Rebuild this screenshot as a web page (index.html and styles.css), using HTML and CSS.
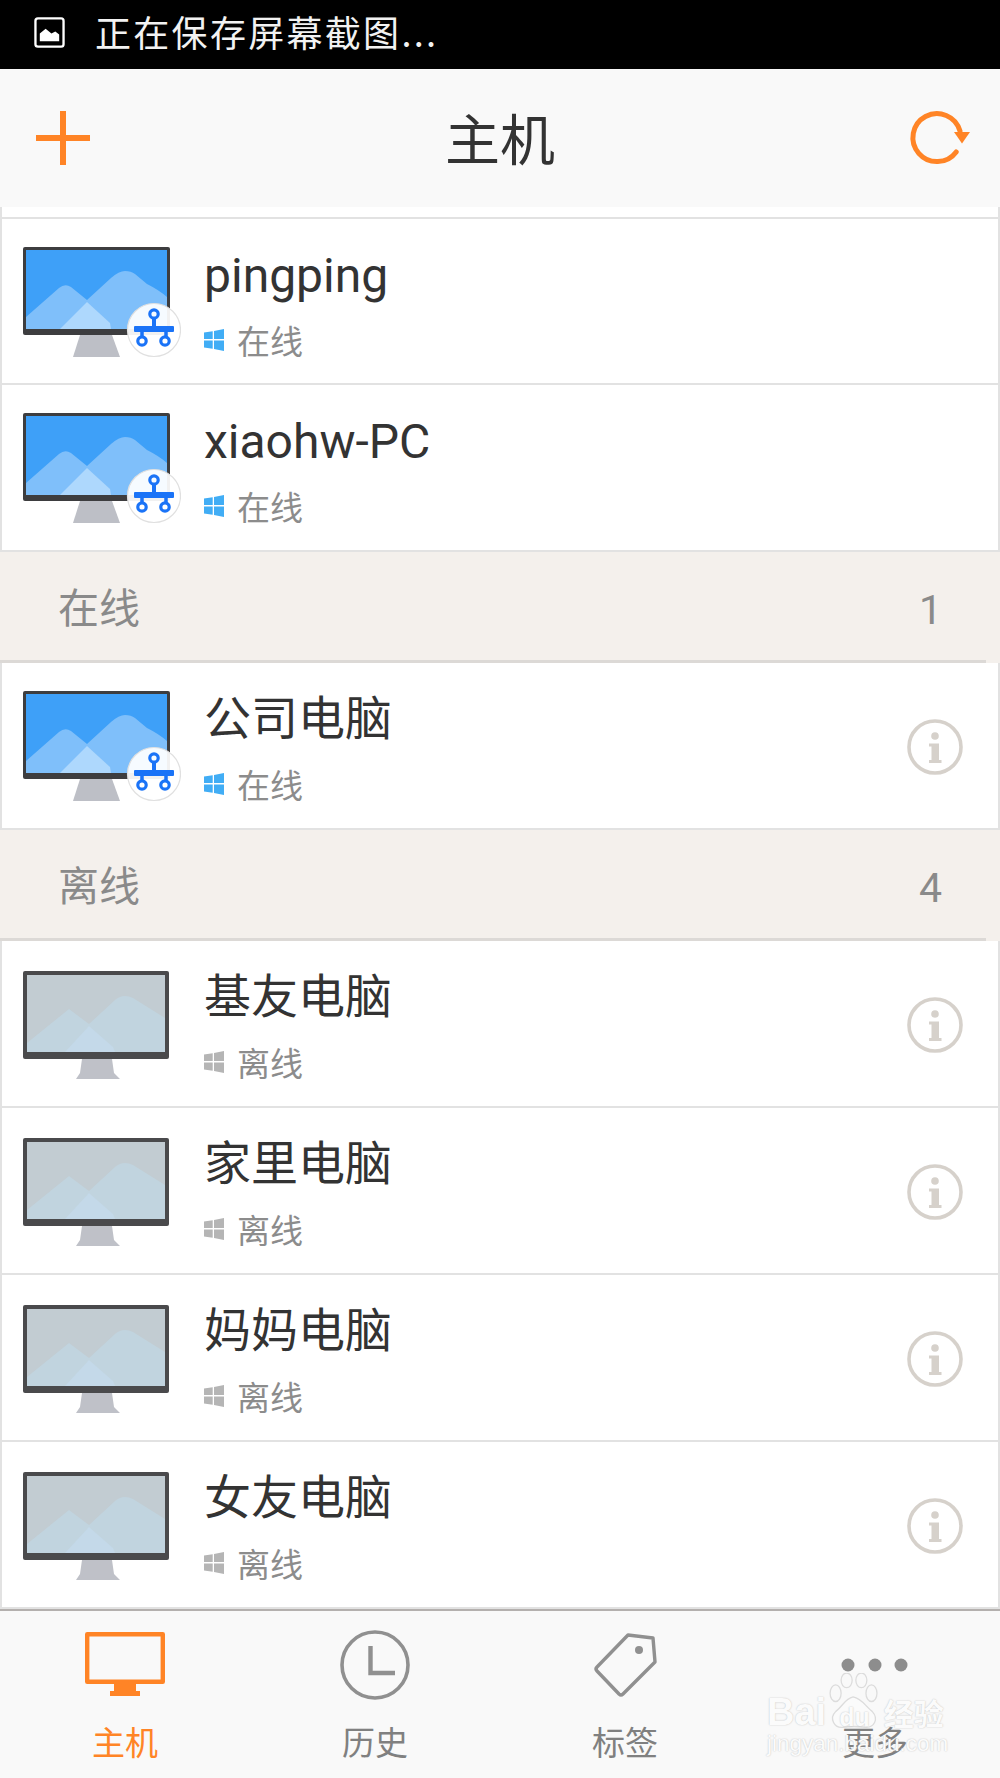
FILE: index.html
```html
<!DOCTYPE html>
<html>
<head>
    <meta charset="UTF-8">
    <title>主机</title>
    <link rel="stylesheet" href="styles.css">
</head>
<body>
    <svg class="defs" width="0" height="0">
        <symbol id="pc-on" viewBox="0 0 158 112">
            <path d="M50 110 L57 88 H89 L97 110Z" fill="#bdbfc6"/>
            <rect x="0" y="0" width="147" height="88" rx="2" fill="#3d3d3f"/>
            <rect x="3" y="3" width="141" height="79" fill="#3ea0f8"/>
            <path d="M3 70 L36 41 Q42 36 48 40 L64 53 L88 31 Q96 24 102 24 Q108 24 112 27 L124 37 Q136 43 144 50 V82 H3Z" fill="#7fbffa"/>
            <path d="M37 82 L64 55 L87 76 L88 82Z" fill="#aed8fd"/>
            <circle cx="131" cy="83" r="26.5" fill="#fff" fill-opacity=".93" stroke="#e0e0e0" stroke-width="1.2"/>
            <path d="M131 71 V83" stroke="#1a73f7" stroke-width="4"/>
            <circle cx="131" cy="67" r="4.2" fill="none" stroke="#1a73f7" stroke-width="3.2"/>
            <rect x="111" y="79" width="40" height="6" rx="1" fill="#1a73f7"/>
            <path d="M119 85 V90 M143 85 V90" stroke="#1a73f7" stroke-width="3.5"/>
            <circle cx="119" cy="94" r="4.2" fill="none" stroke="#1a73f7" stroke-width="3.2"/>
            <circle cx="142" cy="94" r="4.2" fill="none" stroke="#1a73f7" stroke-width="3.2"/>
        </symbol>
        <symbol id="pc-off" viewBox="0 0 158 112">
            <path d="M59 88 H89 L91 102 L97 108 H53 L57 102Z" fill="#bfc1c8"/>
            <rect x="0" y="0" width="146" height="88" rx="2" fill="#4a4a4c"/>
            <rect x="4" y="4" width="138" height="77" fill="#c2ccd2"/>
            <path d="M4 72 L46 38 L66 53 L92 29 Q100 22 110 27 L142 47 V81 H4Z" fill="#c1d4df"/>
            <path d="M42 81 L66 55 L90 76 L92 81Z" fill="#c4d9e9"/>
        </symbol>
        <symbol id="win" viewBox="0 0 20 22">
            <path d="M0 3.6 L8.7 2.2 V10 H0Z M10 2 L20 0 V10 H10Z M0 11.5 H8.7 V19.8 L0 18.4Z M10 11.5 H20 V22 L10 20Z" fill="currentColor"/>
        </symbol>
        <symbol id="info" viewBox="0 0 56 56">
            <circle cx="28" cy="28" r="26" fill="none" stroke="#d6d1cb" stroke-width="3.6"/>
            <circle cx="28" cy="17" r="3.8" fill="#d6d1cb"/>
            <path d="M22 24.5 H32 V41 H34.5 V44 H22 V41 H24.5 V27.5 H22Z" fill="#d6d1cb"/>
        </symbol>
    </svg>

    <div class="page">
        <div class="status">
            <svg class="status-icon" viewBox="0 0 32 32">
                <rect x="1.5" y="1.5" width="29" height="29" rx="2.5" fill="none" stroke="#fff" stroke-width="2.4"/>
                <path d="M6 25 V17 L12 12 L18 17 L22 15 L26 18 V25Z" fill="#fff"/>
            </svg>
            <span>正在保存屏幕截图...</span>
        </div>

        <div class="topbar">
            <svg class="top-icon" viewBox="0 0 54 54">
                <path d="M27 0 V54 M0 27 H54" stroke="#ff8426" stroke-width="6"/>
            </svg>
            <div class="title">主机</div>
            <svg class="top-icon refresh" viewBox="0 0 54 54">
                <path d="M40.2 40.9 A24 24 0 1 1 44 20" fill="none" stroke="#ff8426" stroke-width="5" stroke-linecap="round"/>
                <path d="M38 21 H54 L46 32.5Z" fill="#ff8426"/>
            </svg>
        </div>

        <div class="list">
            <div class="list-gap"></div>
            <div class="row first">
                <svg class="pc"><use href="#pc-on"/></svg>
                <div class="info">
                    <div class="name latin">pingping</div>
                    <div class="state on"><svg class="win"><use href="#win"/></svg>在线</div>
                </div>
            </div>
            <div class="row">
                <svg class="pc"><use href="#pc-on"/></svg>
                <div class="info">
                    <div class="name latin">xiaohw-PC</div>
                    <div class="state on"><svg class="win"><use href="#win"/></svg>在线</div>
                </div>
            </div>

            <div class="section"><span>在线</span><span class="count">1</span></div>
            <div class="row">
                <svg class="pc"><use href="#pc-on"/></svg>
                <div class="info">
                    <div class="name">公司电脑</div>
                    <div class="state on"><svg class="win"><use href="#win"/></svg>在线</div>
                </div>
                <svg class="more"><use href="#info"/></svg>
            </div>

            <div class="section"><span>离线</span><span class="count">4</span></div>
            <div class="row off">
                <svg class="pc"><use href="#pc-off"/></svg>
                <div class="info">
                    <div class="name">基友电脑</div>
                    <div class="state"><svg class="win"><use href="#win"/></svg>离线</div>
                </div>
                <svg class="more"><use href="#info"/></svg>
            </div>
            <div class="row off">
                <svg class="pc"><use href="#pc-off"/></svg>
                <div class="info">
                    <div class="name">家里电脑</div>
                    <div class="state"><svg class="win"><use href="#win"/></svg>离线</div>
                </div>
                <svg class="more"><use href="#info"/></svg>
            </div>
            <div class="row off">
                <svg class="pc"><use href="#pc-off"/></svg>
                <div class="info">
                    <div class="name">妈妈电脑</div>
                    <div class="state"><svg class="win"><use href="#win"/></svg>离线</div>
                </div>
                <svg class="more"><use href="#info"/></svg>
            </div>
            <div class="row off">
                <svg class="pc"><use href="#pc-off"/></svg>
                <div class="info">
                    <div class="name">女友电脑</div>
                    <div class="state"><svg class="win"><use href="#win"/></svg>离线</div>
                </div>
                <svg class="more"><use href="#info"/></svg>
            </div>
        </div>

        <div class="tabs">
            <div class="tab active">
                <svg class="tab-icon" viewBox="0 0 90 90">
                    <path d="M7.2 2.2 H82.8 V49.8 H7.2Z" fill="none" stroke="#ff8426" stroke-width="4.4" stroke-linejoin="round"/>
                    <path d="M34 52 H56 V59 H60 V64 H30 V59 H34Z" fill="#ff8426"/>
                </svg>
                <span>主机</span>
            </div>
            <div class="tab">
                <svg class="tab-icon" viewBox="0 0 90 90">
                    <circle cx="45" cy="33" r="33" fill="none" stroke="#909090" stroke-width="3.6"/>
                    <path d="M40.5 14 V41 H65" fill="none" stroke="#909090" stroke-width="4.4"/>
                </svg>
                <span>历史</span>
            </div>
            <div class="tab">
                <svg class="tab-icon" viewBox="0 0 90 90">
                    <path d="M48 3 L73 6 L75 30 L43 62 Q41 64 39 62 L17 39 Q15 37 17 35 Z" fill="none" stroke="#909090" stroke-width="3.4" stroke-linejoin="round"/>
                    <circle cx="59" cy="18" r="4" fill="#909090"/>
                </svg>
                <span>标签</span>
            </div>
            <div class="tab">
                <svg class="tab-icon" viewBox="0 0 90 90">
                    <circle cx="18" cy="33" r="6.5" fill="#8d8d8d"/>
                    <circle cx="45" cy="33" r="6.5" fill="#8d8d8d"/>
                    <circle cx="71" cy="33" r="6.5" fill="#8d8d8d"/>
                </svg>
                <span>更多</span>
            </div>
        </div>

        <!-- baidu watermark on top of the last tab -->
        <div class="mark">
            <svg class="paw" viewBox="0 0 56 62">
                <g fill="none" stroke="#dcdcdc" stroke-width="1.4">
                    <ellipse cx="8" cy="22" rx="6" ry="9"/>
                    <ellipse cx="20" cy="8" rx="6" ry="8"/>
                    <ellipse cx="36" cy="8" rx="6" ry="8"/>
                    <ellipse cx="47" cy="22" rx="6" ry="9"/>
                    <path d="M27 26 C18 28 16 36 8 42 C1 49 6 60 16 59 C23 58 32 58 40 59 C50 60 55 50 48 42 C40 36 37 28 27 26Z" fill="#fbfbfb"/>
                </g>
            </svg>
            <div class="mark-line"><span>Bai</span><span class="mark-du">du</span><span class="mark-cn">经验</span></div>
            <div class="mark-url">jingyan.baidu.com</div>
        </div>
    </div>
</body>
</html>
```
FILE: styles.css
```css
body {
    margin: 0;
    background-color: #fff;
    font-family: "Noto Sans CJK SC", sans-serif;
}

.defs {
    position: absolute;
}

.page {
    position: relative;
    display: flex;
    flex-direction: column;
    width: 1000px;
    height: 1778px;
    overflow: hidden;
}

.status {
    display: flex;
    align-items: center;
    height: 69px;
    padding-left: 34px;
    background-color: #000;
    color: #f2f2f2;
    font-size: 36px;
    letter-spacing: 2.3px;
}

.status-icon {
    width: 31px;
    height: 31px;
    margin-top: -3px;
    margin-right: 30px;
}

.status span {
    margin-top: -7px;
}

.topbar {
    display: grid;
    grid-template-columns: 1fr auto 1fr;
    align-items: center;
    height: 139px;
    padding: 0 30px 0 36px;
    background-color: #f9f9f9;
}

.top-icon {
    width: 54px;
    height: 54px;
    overflow: visible;
}

.refresh {
    justify-self: end;
}

.title {
    margin-top: -4px;
    margin-left: -6px;
    color: #333;
    font-size: 55px;
    font-weight: 400;
}

.list {
    flex: 1;
    background-color: #fff;
}

.list-gap {
    height: 10px;
    border-left: 2px solid #e2e2e2;
    border-right: 2px solid #e2e2e2;
}

.row {
    display: flex;
    box-sizing: border-box;
    height: 167px;
    padding: 28px 0 0 21px;
    border-left: 2px solid #e2e2e2;
    border-right: 2px solid #e2e2e2;
    border-bottom: 2px solid #e2e2e2;
}

.row.first {
    height: 168px;
    border-top: 2px solid #e2e2e2;
}

.row.off {
    padding-top: 30px;
}

.pc {
    width: 158px;
    height: 112px;
    flex-shrink: 0;
}

.info {
    flex: 1;
    margin-left: 23px;
    margin-top: -11px;
}

.off .info {
    margin-top: -13px;
}

.name {
    height: 70px;
    line-height: 70px;
    color: #333;
    font-size: 47px;
}

.latin {
    font-family: Roboto, sans-serif;
    font-size: 48px;
    margin-top: 5px;
    margin-bottom: -5px;
}

.state {
    display: flex;
    align-items: center;
    height: 50px;
    margin-top: 9px;
    color: #8c8c8c;
    font-size: 33px;
}

.win {
    width: 20px;
    height: 22px;
    margin-right: 13px;
    color: #b5b5b5;
}

.state.on .win {
    color: #41adf5;
}

.more {
    width: 56px;
    height: 56px;
    margin: 28px 35px 0 0;
}

.off .more {
    margin-top: 26px;
}

.section {
    display: flex;
    align-items: center;
    justify-content: space-between;
    box-sizing: border-box;
    height: 111px;
    padding: 0 58px 0 58px;
    background-color: #f4f0ec;
    background-image: linear-gradient(#dcd9d6, #dcd9d6);
    background-repeat: no-repeat;
    background-size: 986px 3px;
    background-position: left bottom;
    color: #8a8a8a;
    font-size: 41px;
}

.section span {
    margin-top: -4px;
}

.section .count {
    margin-top: 6px;
    font-family: Roboto, sans-serif;
}

.tabs {
    display: flex;
    height: 168px;
    border-top: 2px solid #b4b0ae;
    background-color: #f9f9f9;
}

.tab {
    flex: 1;
    display: flex;
    flex-direction: column;
    align-items: center;
    padding-top: 21px;
    color: #808080;
    font-size: 33px;
}

.tab.active {
    color: #ff8426;
}

.tab-icon {
    width: 90px;
    height: 90px;
    overflow: visible;
}

.tab span {
    margin-top: -5px;
}

.mark {
    position: absolute;
    left: 767px;
    top: 1668px;
    width: 184px;
    color: #fbfbfb;
    text-shadow: 0 0 1.5px #b9b9b9;
}

.paw {
    position: absolute;
    left: 61px;
    top: 5px;
    width: 52px;
    height: 57px;
}

.mark-line {
    position: relative;
    display: flex;
    align-items: center;
    height: 36px;
    margin-top: 26px;
    font-family: "Liberation Sans", sans-serif;
    font-size: 38px;
    font-weight: 700;
}

.mark-du {
    margin-left: 13px;
    margin-top: 10px;
    font-size: 25px;
}

.mark-cn {
    margin-left: 14px;
    font-family: "Noto Sans CJK SC", sans-serif;
    font-size: 30px;
}

.mark-url {
    position: relative;
    margin-top: 1px;
    font-family: "Liberation Sans", sans-serif;
    font-size: 22.5px;
    white-space: nowrap;
}
```
